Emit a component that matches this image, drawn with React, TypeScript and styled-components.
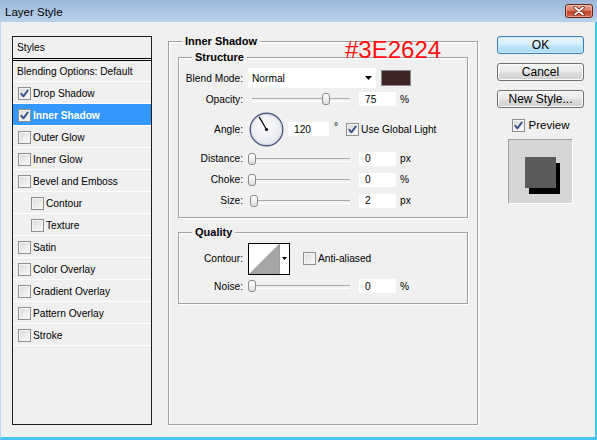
import React from "react";
import styled, { createGlobalStyle } from "styled-components";

const UI = `"Liberation Sans", Arial, sans-serif`;

const GlobalStyle = createGlobalStyle`
  html, body { margin: 0; padding: 0; }
  body { background: #f0f0f0; font-family: ${UI}; }
  * { box-sizing: border-box; }
`;

const Window = styled.div`
  position: relative;
  width: 597px;
  height: 440px;
  display: flex;
  flex-direction: column;
  background: #f0f0f0;
  font-family: ${UI};
  font-size: 10.2px;
  color: #000;
  overflow: hidden;
`;

const TitleBar = styled.div`
  height: 22px;
  flex: none;
  display: flex;
  align-items: center;
  justify-content: space-between;
  padding: 0 4px 0 5px;
  background: linear-gradient(#9cb7d9, #bad1eb);
`;

const TitleText = styled.span`
  font-size: 11.5px;
  color: #000;
  padding-top: 2px;
`;

const CloseButton = styled.div`
  width: 28px;
  height: 14px;
  border: 1px solid #6b2418;
  border-radius: 3px;
  background: linear-gradient(#eaa898 0%, #d97a63 45%, #c4412a 55%, #d26a50 100%);
  box-shadow: inset 0 0 0 1px rgba(255, 220, 210, 0.5);
  display: flex;
  align-items: center;
  justify-content: center;
`;

const Body = styled.div`
  flex: 1;
  display: flex;
  align-items: flex-start;
  padding: 14px 0 0 11px;
  border-left: 1px solid #b4d6f2;
  border-right: 2px solid #47c4ee;
  border-bottom: 3px solid #47c4ee;
`;

/* ---------- Left styles list ---------- */

const StylesPanel = styled.div`
  flex: none;
  width: 140px;
  height: 389px;
  border: 1px solid #1e1e1e;
  display: flex;
  flex-direction: column;
`;

const PanelHeader = styled.div`
  height: 24px;
  padding-left: 4px;
  display: flex;
  align-items: center;
  border-bottom: 3px double #000;
`;

const BlendRow = styled.div`
  height: 21px;
  padding-left: 4px;
  display: flex;
  align-items: center;
  border-bottom: 1px solid #fff;
`;

const StyleRow = styled.div<{ $indent?: boolean; $active?: boolean }>`
  height: 22px;
  padding-left: ${(p) => (p.$indent ? 18 : 5)}px;
  padding-top: 1px;
  display: flex;
  align-items: center;
  gap: 2px;
  border-bottom: 1px solid #fff;
  background: ${(p) => (p.$active ? "#3399ff" : "transparent")};
  color: ${(p) => (p.$active ? "#fff" : "#000")};
  font-weight: ${(p) => (p.$active ? "bold" : "normal")};
`;

/* ---------- Checkbox ---------- */

const CheckBox = styled.span`
  flex: none;
  width: 13px;
  height: 13px;
  border: 1px solid #8e8f8f;
  background: linear-gradient(135deg, #dadada, #fbfbfb);
  box-shadow: inset 0 0 0 1px #f4f4f4;
  display: inline-flex;
  align-items: center;
  justify-content: center;
`;

const Check: React.FC<{ checked?: boolean }> = ({ checked }) => (
  <CheckBox>
    {checked && (
      <svg width="11" height="11" viewBox="0 0 11 11">
        <path d="M2.2 5.6 L4.4 8.4 L8.8 2.4" fill="none" stroke="#3a4f8c" strokeWidth="1.8" strokeLinecap="round" strokeLinejoin="round" />
      </svg>
    )}
  </CheckBox>
);

/* ---------- Group boxes ---------- */

const MainGroup = styled.div`
  position: relative;
  flex: none;
  margin: 5px 0 0 16px;
  width: 310px;
  height: 384px;
  border: 1px solid #a0a0a0;
  box-shadow: inset 1px 1px 0 #fff, 1px 1px 0 #fff;
  padding: 15px 10px 0 9px;
`;

const SubGroup = styled.div<{ $h: number; $top?: number }>`
  position: relative;
  width: 290px;
  height: ${(p) => p.$h}px;
  margin-top: ${(p) => p.$top ?? 0}px;
  border: 1px solid #a0a0a0;
  box-shadow: inset 1px 1px 0 #fff, 1px 1px 0 #fff;
  padding-top: ${(p) => (p.$h > 100 ? 10 : 9)}px;
`;

const Legend = styled.span`
  position: absolute;
  top: -8px;
  left: 13px;
  padding: 0 3px;
  line-height: 14px;
  font-size: 11px;
  font-weight: bold;
  background: #f0f0f0;
`;

const FieldRow = styled.div<{ $h: number }>`
  display: flex;
  align-items: center;
  height: ${(p) => p.$h}px;
`;

const Label = styled.span`
  flex: none;
  width: 64px;
  margin-right: 5px;
  text-align: right;
  white-space: nowrap;
`;

const Select = styled.div`
  width: 128px;
  height: 20px;
  background: #fff;
  padding: 0 4px;
  display: flex;
  align-items: center;
  justify-content: space-between;
`;

const ColorSwatch = styled.div<{ $color: string }>`
  width: 30px;
  height: 16px;
  margin-left: 5px;
  border: 1px solid #8a8a8a;
  background: ${(p) => p.$color};
`;

const SliderBox = styled.div`
  position: relative;
  flex: none;
  width: 106px;
  height: 14px;
  &::before {
    content: "";
    position: absolute;
    left: 4px;
    right: 4px;
    top: 6px;
    height: 2px;
    border-top: 1px solid #a9a9a9;
    border-bottom: 1px solid #fff;
  }
`;

const Thumb = styled.span`
  position: absolute;
  top: 1px;
  width: 8px;
  height: 12px;
  border: 1px solid #8a8a8a;
  border-radius: 3px;
  background: linear-gradient(#ffffff, #dedede);
`;

const Slider: React.FC<{ value: number }> = ({ value }) => (
  <SliderBox>
    <Thumb style={{ left: `${(value / 100) * 98}px` }} />
  </SliderBox>
);

const NumInput = styled.div<{ $w?: number; $ml?: number }>`
  flex: none;
  width: ${(p) => p.$w ?? 37}px;
  height: 14px;
  margin-left: ${(p) => p.$ml ?? 5}px;
  padding-left: 6px;
  background: #fff;
  display: flex;
  align-items: center;
`;

const Unit = styled.span<{ $ml?: number }>`
  margin-left: ${(p) => p.$ml ?? 4}px;
`;

const Degree = styled.span`
  margin-left: 5px;
  align-self: flex-start;
  margin-top: 11px;
`;

const InlineCheck = styled.label<{ $ml: number }>`
  display: flex;
  align-items: center;
  gap: 2px;
  margin-left: ${(p) => p.$ml}px;
`;

const DialWrap = styled.div`
  flex: none;
  width: 35px;
  height: 35px;
  margin-left: 1px;
`;

const ContourBox = styled.div`
  flex: none;
  width: 42px;
  height: 32px;
  border: 1px solid #000;
  display: flex;
  background: #fff;
`;

const ContourPreview = styled.div`
  width: 31px;
  height: 100%;
  border-right: 1px solid #9a9a9a;
`;

const ContourArrow = styled.div`
  flex: 1;
  display: flex;
  align-items: center;
  justify-content: center;
`;

/* ---------- Right column ---------- */

const RightColumn = styled.div`
  flex: none;
  width: 87px;
  margin-left: 19px;
  display: flex;
  flex-direction: column;
  align-items: center;
  gap: 9px;
`;

const Button = styled.div<{ $default?: boolean }>`
  width: 87px;
  height: 18px;
  border: 1px solid ${(p) => (p.$default ? "#3c7fb1" : "#707070")};
  border-radius: 3px;
  background: ${(p) =>
    p.$default
      ? "linear-gradient(#eaf6fd 0%, #d9f0fc 45%, #bee6fd 55%, #a7d9f5 100%)"
      : "linear-gradient(#f2f2f2 0%, #ebebeb 45%, #dddddd 55%, #cfcfcf 100%)"};
  box-shadow: inset 0 0 0 1px ${(p) => (p.$default ? "#c8eafb" : "#fcfcfc")};
  display: flex;
  align-items: center;
  justify-content: center;
  font-size: 12px;
`;

const PreviewRow = styled.label`
  height: 14px;
  margin-top: 1px;
  display: flex;
  align-items: center;
  gap: 4px;
  font-size: 11.5px;
`;

const PreviewSwatch = styled.div`
  width: 65px;
  height: 65px;
  margin-top: -2px;
  background: #d6d6d6;
  border-top: 1px solid #a0a0a0;
  border-left: 1px solid #a0a0a0;
  border-right: 1px solid #fff;
  border-bottom: 1px solid #fff;
  display: flex;
  justify-content: center;
  padding-top: 17px;
`;

const PreviewSquare = styled.div`
  width: 31px;
  height: 31px;
  background: #5b5b5b;
  box-shadow: 4px 6px 0 #000;
`;

const HexNote = styled.span`
  position: absolute;
  left: 345px;
  top: 38px;
  font-family: ${UI};
  font-size: 24px;
  line-height: 24px;
  color: #ff1010;
`;

const styleItems: { name: string; checked?: boolean; indent?: boolean; active?: boolean }[] = [
  { name: "Drop Shadow", checked: true },
  { name: "Inner Shadow", checked: true, active: true },
  { name: "Outer Glow" },
  { name: "Inner Glow" },
  { name: "Bevel and Emboss" },
  { name: "Contour", indent: true },
  { name: "Texture", indent: true },
  { name: "Satin" },
  { name: "Color Overlay" },
  { name: "Gradient Overlay" },
  { name: "Pattern Overlay" },
  { name: "Stroke" },
];

const Dial: React.FC = () => (
  <DialWrap>
    <svg width="35" height="35" viewBox="0 0 35 35">
      <defs>
        <radialGradient id="dialFill" cx="45%" cy="40%" r="60%">
          <stop offset="0%" stopColor="#ffffff" />
          <stop offset="100%" stopColor="#e4e6ee" />
        </radialGradient>
      </defs>
      <circle cx="17.5" cy="17.5" r="16.3" fill="url(#dialFill)" stroke="#4f5d7c" strokeWidth="1.4" />
      <circle cx="17.5" cy="17.5" r="15.2" fill="none" stroke="#c9d0e0" strokeWidth="0.8" />
      <line x1="17.5" y1="17.5" x2="10.2" y2="4.9" stroke="#000" strokeWidth="1.2" />
      <circle cx="17.5" cy="17.5" r="1.6" fill="#000" />
    </svg>
  </DialWrap>
);

const DownArrow: React.FC<{ w: number }> = ({ w }) => (
  <svg width={w} height={Math.ceil(w / 2)} viewBox={`0 0 ${w} ${Math.ceil(w / 2)}`}>
    <polygon points={`0,0 ${w},0 ${w / 2},${Math.ceil(w / 2)}`} fill="#000" />
  </svg>
);

export default function App() {
  return (
    <Window>
      <GlobalStyle />
      <TitleBar>
        <TitleText>Layer Style</TitleText>
        <CloseButton>
          <svg width="12" height="10" viewBox="0 0 12 10">
            <path d="M2 1.5 L10 8.5 M10 1.5 L2 8.5" stroke="#5a1a10" strokeWidth="3.2" strokeLinecap="round" />
            <path d="M2 1.5 L10 8.5 M10 1.5 L2 8.5" stroke="#ffffff" strokeWidth="1.8" strokeLinecap="round" />
          </svg>
        </CloseButton>
      </TitleBar>
      <Body>
        <StylesPanel>
          <PanelHeader>Styles</PanelHeader>
          <BlendRow>Blending Options: Default</BlendRow>
          {styleItems.map((it) => (
            <StyleRow key={it.name} $indent={it.indent} $active={it.active}>
              <Check checked={it.checked} />
              <span>{it.name}</span>
            </StyleRow>
          ))}
        </StylesPanel>

        <MainGroup>
          <Legend>Inner Shadow</Legend>
          <SubGroup $h={161}>
            <Legend>Structure</Legend>
            <FieldRow $h={20}>
              <Label>Blend Mode:</Label>
              <Select>
                <span>Normal</span>
                <DownArrow w={7} />
              </Select>
              <ColorSwatch $color="#3E2624" />
            </FieldRow>
            <FieldRow $h={22}>
              <Label>Opacity:</Label>
              <Slider value={75} />
              <NumInput>75</NumInput>
              <Unit>%</Unit>
            </FieldRow>
            <FieldRow $h={38}>
              <Label>Angle:</Label>
              <Dial />
              <NumInput $w={41} $ml={4}>120</NumInput>
              <Degree>°</Degree>
              <InlineCheck $ml={8}>
                <Check checked />
                <span>Use Global Light</span>
              </InlineCheck>
            </FieldRow>
            <FieldRow $h={21}>
              <Label>Distance:</Label>
              <Slider value={0} />
              <NumInput>0</NumInput>
              <Unit>px</Unit>
            </FieldRow>
            <FieldRow $h={21}>
              <Label>Choke:</Label>
              <Slider value={0} />
              <NumInput>0</NumInput>
              <Unit>%</Unit>
            </FieldRow>
            <FieldRow $h={21}>
              <Label>Size:</Label>
              <Slider value={2} />
              <NumInput>2</NumInput>
              <Unit>px</Unit>
            </FieldRow>
          </SubGroup>

          <SubGroup $h={72} $top={14}>
            <Legend>Quality</Legend>
            <FieldRow $h={33}>
              <Label>Contour:</Label>
              <ContourBox>
                <ContourPreview>
                  <svg width="30" height="30" viewBox="0 0 30 30">
                    <polygon points="0,30 30,0 30,30" fill="#a5a5a5" />
                  </svg>
                </ContourPreview>
                <ContourArrow>
                  <DownArrow w={5} />
                </ContourArrow>
              </ContourBox>
              <InlineCheck $ml={13}>
                <Check />
                <span>Anti-aliased</span>
              </InlineCheck>
            </FieldRow>
            <FieldRow $h={22}>
              <Label>Noise:</Label>
              <Slider value={0} />
              <NumInput>0</NumInput>
              <Unit>%</Unit>
            </FieldRow>
          </SubGroup>
        </MainGroup>

        <RightColumn>
          <Button $default>OK</Button>
          <Button>Cancel</Button>
          <Button>New Style...</Button>
          <PreviewRow>
            <Check checked />
            <span>Preview</span>
          </PreviewRow>
          <PreviewSwatch>
            <PreviewSquare />
          </PreviewSwatch>
        </RightColumn>
      </Body>
      <HexNote>#3E2624</HexNote>
    </Window>
  );
}
